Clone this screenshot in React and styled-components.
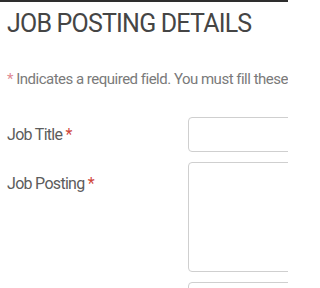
import React from 'react';
import styled, { createGlobalStyle } from 'styled-components';

const GlobalStyle = createGlobalStyle`
  body {
    margin: 0;
    background: #ffffff;
    font-family: Roboto, "Liberation Sans", sans-serif;
    overflow: hidden;
  }
`;

const Page = styled.div`
  width: 288px;
  height: 288px;
  overflow: hidden;
  border-top: 2px solid #2e2e2e;
  box-sizing: border-box;
`;

const Heading = styled.h1`
  margin: 7px 0 0 7px;
  font-size: 25px;
  line-height: 30px;
  font-weight: 400;
  letter-spacing: -0.8px;
  color: #454545;
  white-space: nowrap;
`;

const Intro = styled.p`
  margin: 31px 0 0 7px;
  font-size: 15px;
  line-height: 18px;
  letter-spacing: -0.5px;
  color: #7a7a7a;
  white-space: nowrap;
`;

const Star = styled.span`
  color: ${(p) => (p.$soft ? '#e08a94' : '#d0483c')};
`;

const Form = styled.div`
  margin-top: 29px;
  display: flex;
  flex-direction: column;
  gap: 10px;
`;

const Row = styled.div`
  display: grid;
  grid-template-columns: 188px 100px;
`;

const Label = styled.label`
  padding: ${(p) => p.$top}px 0 0 7px;
  font-size: 16px;
  line-height: 19px;
  letter-spacing: -0.7px;
  color: #5c5c5c;
`;

const Field = styled.div`
  height: ${(p) => p.$h}px;
  margin-right: -20px;
  border: 1px solid #cfcfcf;
  border-radius: 4px;
  box-sizing: border-box;
  background: #fff;
`;

const fields = [
  { label: 'Job Title', top: 8, h: 35 },
  { label: 'Job Posting', top: 12, h: 110 },
  { label: '', top: 0, h: 35 },
];

const App = () => (
  <Page>
    <GlobalStyle />
    <Heading>JOB POSTING DETAILS</Heading>
    <Intro>
      <Star $soft>*</Star> Indicates a required field. You must fill these
    </Intro>
    <Form>
      {fields.map((f, i) => (
        <Row key={i}>
          <Label $top={f.top}>
            {f.label}
            {f.label && <Star> *</Star>}
          </Label>
          <Field $h={f.h} />
        </Row>
      ))}
    </Form>
  </Page>
);

export default App;
